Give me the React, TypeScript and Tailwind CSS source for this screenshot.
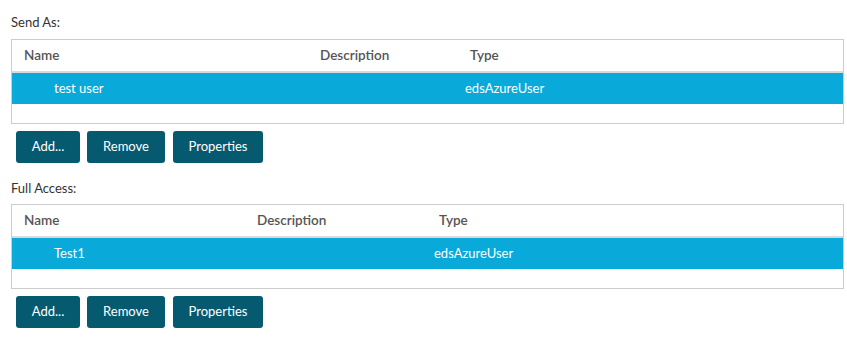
import React from "react";

type Cols = { c1: string; c2: string };

const AccessTable = ({ cols, name, type }: { cols: Cols; name: string; type: string }) => {
  return (
    <div className="border border-[#cccccc] bg-white">
      <div className="flex h-[31px] items-center text-[13.5px] font-semibold text-[#555555]">
        <div className={`${cols.c1} pl-[12px]`}>Name</div>
        <div className={`${cols.c2} pl-[12px]`}>Description</div>
        <div className="flex-1 pl-[12px]">Type</div>
      </div>
      <div className="h-[2px] bg-[#dadada]" />
      <div className="flex h-[31px] items-center bg-[#09a9d9] text-[13px] text-white">
        <div className={`${cols.c1} pl-[42px]`}>{name}</div>
        <div className={cols.c2} />
        <div className="flex-1 pl-[7px]">{type}</div>
      </div>
      <div className="h-[19px]" />
    </div>
  );
};

const ActionButtons = () => (
  <div className="mt-[7px] ml-[5px] flex gap-[7px]">
    <button className="h-[32px] w-[64px] rounded-[3px] bg-[#065a6f] text-[13px] text-white">Add...</button>
    <button className="h-[32px] w-[78px] rounded-[3px] bg-[#065a6f] text-[13px] text-white">Remove</button>
    <button className="ml-[1px] h-[32px] w-[90px] rounded-[3px] bg-[#065a6f] text-[13px] text-white">Properties</button>
  </div>
);

export default function App() {
  return (
    <div className="min-h-screen bg-white pl-[11px] pr-[3px] font-['Lato',sans-serif] text-[#333333]">
      <div className="pt-[13px] text-[13px] leading-[18px]">Send As:</div>
      <div className="mt-[8px]">
        <AccessTable cols={{ c1: "w-[296px]", c2: "w-[150px]" }} name="test user" type="edsAzureUser" />
      </div>
      <ActionButtons />
      <div className="mt-[16px] text-[13px] leading-[18px]">Full Access:</div>
      <div className="mt-[7px]">
        <AccessTable cols={{ c1: "w-[233px]", c2: "w-[182px]" }} name="Test1" type="edsAzureUser" />
      </div>
      <ActionButtons />
    </div>
  );
}
